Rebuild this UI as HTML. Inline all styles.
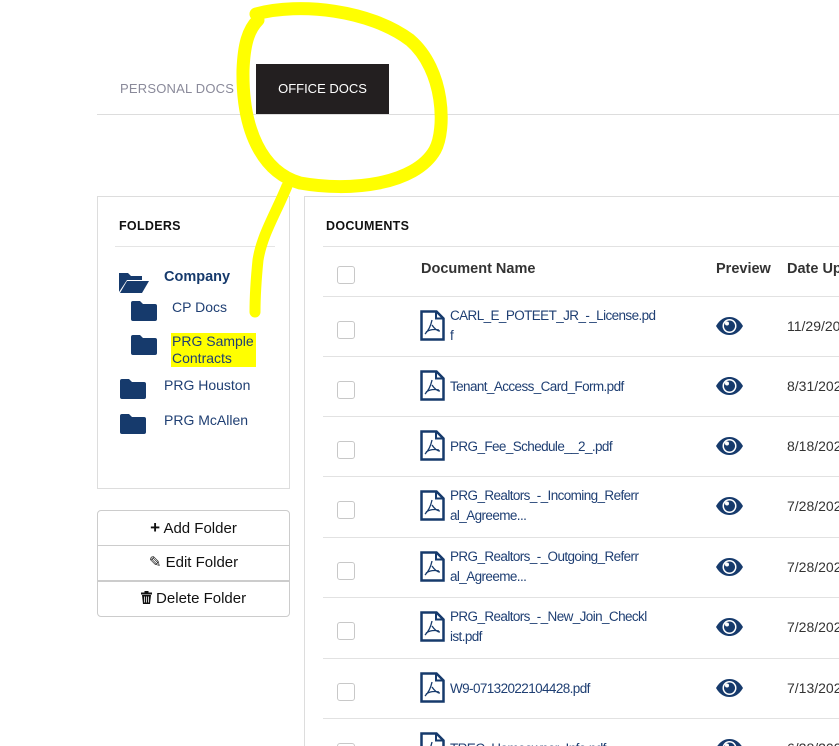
<!DOCTYPE html>
<html><head><meta charset="utf-8"><style>
*{margin:0;padding:0;box-sizing:border-box}
html,body{width:839px;height:746px;overflow:hidden}
body{background:#fff;font-family:"Liberation Sans",sans-serif;position:relative}
.a{position:absolute}
.hl{background:#ffff00}
.t{color:#1f3f73;font-size:14px;white-space:nowrap}
.cb{position:absolute;left:337px;width:18px;height:18px;border:1px solid #c8c8c8;border-radius:3px}
.ln{position:absolute;left:323px;right:0;height:1px;background:#e2e2e2}
.doc{position:absolute;left:450px;color:#1f3f73;font-size:13.5px;letter-spacing:-0.6px;line-height:20px;white-space:nowrap}
.date{position:absolute;left:787px;color:#333;font-size:14px;white-space:nowrap}
.btn{position:absolute;left:97px;width:193px;height:36px;border:1px solid #ccc;font-size:15px;color:#111;text-align:center;line-height:34px}
.hd{position:absolute;font-size:14.5px;font-weight:bold;color:#333;white-space:nowrap}
</style></head><body>
<div class="a" style="left:120px;top:81px;font-size:13px;color:#8a8a9a;letter-spacing:.2px">PERSONAL DOCS</div>
<div class="a" style="left:256px;top:64px;width:133px;height:50px;background:#231f20;color:#fff;font-size:13px;line-height:50px;text-align:center">OFFICE DOCS</div>
<div class="a" style="left:97px;top:114px;right:0;height:1px;background:#ddd"></div>

<div class="a" style="left:97px;top:196px;width:193px;height:293px;border:1px solid #ddd"></div>
<div class="a" style="left:119px;top:219px;font-size:12.5px;font-weight:bold;color:#111;letter-spacing:.3px">FOLDERS</div>
<div class="a" style="left:115px;top:246px;width:160px;height:1px;background:#e5e5e5"></div>

<svg class="a" style="left:118px;top:270px" width="32" height="24" viewBox="0 0 32 24"><path d="M1 3h9l3 3h11v4H9L1 22z" fill="#163a6c"/><path d="M9 11h22L24 23H2z" fill="#163a6c"/></svg>
<div class="a t" style="left:164px;top:269px;font-weight:bold;font-size:14.5px;color:#163a6c">Company</div>
<svg class="a" style="left:130px;top:300px" width="28" height="22"><path d="M1 3a2 2 0 0 1 2-2h7l3 3h12a2 2 0 0 1 2 2v13a2 2 0 0 1-2 2H3a2 2 0 0 1-2-2z" fill="#163a6c"/></svg>
<div class="a t" style="left:172px;top:299px">CP Docs</div>
<svg class="a" style="left:130px;top:334px" width="28" height="22"><path d="M1 3a2 2 0 0 1 2-2h7l3 3h12a2 2 0 0 1 2 2v13a2 2 0 0 1-2 2H3a2 2 0 0 1-2-2z" fill="#163a6c"/></svg>
<div class="a t hl" style="left:171px;top:333px;line-height:17px;padding:0 2px 0 1px">PRG Sample<br>Contracts</div>
<svg class="a" style="left:119px;top:378px" width="28" height="22"><path d="M1 3a2 2 0 0 1 2-2h7l3 3h12a2 2 0 0 1 2 2v13a2 2 0 0 1-2 2H3a2 2 0 0 1-2-2z" fill="#163a6c"/></svg>
<div class="a t" style="left:164px;top:377px">PRG Houston</div>
<svg class="a" style="left:119px;top:413px" width="28" height="22"><path d="M1 3a2 2 0 0 1 2-2h7l3 3h12a2 2 0 0 1 2 2v13a2 2 0 0 1-2 2H3a2 2 0 0 1-2-2z" fill="#163a6c"/></svg>
<div class="a t" style="left:164px;top:412px">PRG McAllen</div>

<div class="btn" style="top:510px;border-radius:4px 4px 0 0"><b style="font-size:17px">+</b> Add Folder</div>
<div class="btn" style="top:545px">✎ Edit Folder</div>
<div class="btn" style="top:581px;border-radius:0 0 4px 4px"><svg width="11" height="13" viewBox="0 0 11 13" style="vertical-align:-1px"><rect x="0" y="1.5" width="11" height="2" fill="#111"/><rect x="3.5" y="0" width="4" height="2" fill="#111"/><path d="M1 4h9l-1 9H2z" fill="#111"/><path d="M3.5 5.5v6M5.5 5.5v6M7.5 5.5v6" stroke="#fff" stroke-width=".8"/></svg> Delete Folder</div>

<div class="a" style="left:304px;top:196px;width:1px;height:550px;background:#ddd"></div>
<div class="a" style="left:304px;top:196px;right:0;height:1px;background:#ddd"></div>
<div class="a" style="left:326px;top:219px;font-size:12.5px;font-weight:bold;color:#111;letter-spacing:.3px">DOCUMENTS</div>
<div class="ln" style="top:246px"></div>
<div class="cb" style="top:266px"></div>
<div class="hd" style="left:421px;top:261px">Document Name</div>
<div class="hd" style="left:716px;top:261px">Preview</div>
<div class="hd" style="left:787px;top:261px">Date Uploaded</div>

<div id="rows"></div>
<script>
var R=[["CARL_E_POTEET_JR_-_License.pd<br>f","11/29/2022",296],["Tenant_Access_Card_Form.pdf","8/31/2022",356],["PRG_Fee_Schedule__2_.pdf","8/18/2022",416],["PRG_Realtors_-_Incoming_Referr<br>al_Agreeme...","7/28/2022",476],["PRG_Realtors_-_Outgoing_Referr<br>al_Agreeme...","7/28/2022",537],["PRG_Realtors_-_New_Join_Checkl<br>ist.pdf","7/28/2022",597],["W9-07132022104428.pdf","7/13/2022",658],["TREC_Homeowner_Info.pdf","6/28/2022",718]];
var h="";R.forEach(function(r){var y=r[2],two=r[0].indexOf("<br>")>0;
h+='<div class="ln" style="top:'+y+'px"></div><div class="cb" style="top:'+(y+25)+'px"></div>';
h+='<svg class="a" style="left:420px;top:'+(y+14)+'px" width="25" height="31" viewBox="0 0 25 31"><path d="M1.5 1.5h15l7 7v21h-22z" fill="none" stroke="#163a6c" stroke-width="2.5"/><path d="M16 1.5v7h7.5" fill="none" stroke="#163a6c" stroke-width="2"/><path d="M12 10c-1 5-3 10-7 14M12 15c2 3 5 6 8 6M6 22c3-2 8-3 13-2" fill="none" stroke="#163a6c" stroke-width="1.3"/></svg>';
h+='<div class="doc" style="top:'+(two?y+10:y+21)+'px">'+r[0]+'</div>';
h+='<svg class="a" style="left:715px;top:'+(y+20)+'px" width="29" height="20" viewBox="0 0 29 20"><path d="M1 10C5 3 10 1 14.5 1S24 3 28 10C24 17 19 19 14.5 19S5 17 1 10z" fill="#163a6c"/><circle cx="14.5" cy="10" r="7" fill="#fff"/><circle cx="14.5" cy="10" r="5.5" fill="#163a6c"/><circle cx="12" cy="7.5" r="2" fill="#fff"/></svg>';
h+='<div class="date" style="top:'+(y+22)+'px">'+r[1]+'</div>';});
document.getElementById("rows").innerHTML=h;
</script>

<svg class="a" style="left:0;top:0" width="839" height="746">
<path d="M256 14C300 2 370 10 410 40C445 70 446 130 435 150C415 185 350 192 300 183C262 172 242 130 243 70C244 45 248 30 258 20" fill="none" stroke="#ffff00" stroke-width="13" stroke-linecap="round"/>
<path d="M287 186C275 215 262 235 258 260C256 280 255 295 255 312" fill="none" stroke="#ffff00" stroke-width="11" stroke-linecap="round"/>
</svg>
</body></html>
